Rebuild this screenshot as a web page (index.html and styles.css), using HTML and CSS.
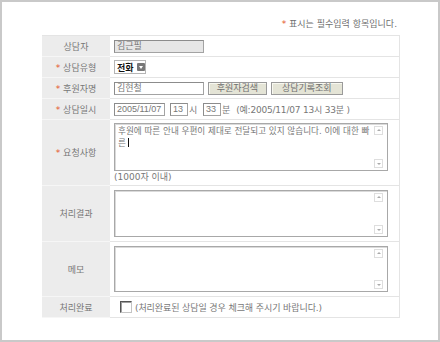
FILE: index.html
```html
<!DOCTYPE html>
<html lang="ko">
<head>
    <meta charset="UTF-8">
    <title>상담 등록</title>
    <link rel="stylesheet" href="styles.css">
</head>
<body>
    <div class="frame">
        <p class="note"><span class="req">*</span> 표시는 필수입력 항목입니다.</p>

        <table class="form">
            <tr class="row-line">
                <th>상담자</th>
                <td><span class="field field-off w-name">김근필</span></td>
            </tr>
            <tr class="row-line">
                <th><span class="req">*</span> 상담유형</th>
                <td>
                    <span class="select">전화<span class="select-arrow"></span></span>
                </td>
            </tr>
            <tr class="row-line">
                <th><span class="req">*</span> 후원자명</th>
                <td>
                    <span class="field w-name">김현철</span>
                    <span class="btn w-btn1">후원자검색</span>
                    <span class="btn w-btn2">상담기록조회</span>
                </td>
            </tr>
            <tr class="row-line">
                <th><span class="req">*</span> 상담일시</th>
                <td>
                    <span class="field w-date">2005/11/07</span>
                    <span class="field w-time">13</span><span class="unit">시</span>
                    <span class="field w-time">33</span><span class="unit">분</span>
                    <span class="example">(예:2005/11/07 13시 33분 )</span>
                </td>
            </tr>
            <tr class="row-request">
                <th><span class="req">*</span> 요청사항</th>
                <td>
                    <div class="textbox tb-request">
                        <div class="textbox-text">후원에 따른 안내 우편이 제대로 전달되고 있지 않습니다. 이에 대한 빠<br>른<span class="caret"></span></div>
                        <div class="scroll"><span class="arrow up"></span><span class="arrow down"></span></div>
                    </div>
                    <div class="limit">(1000자 이내)</div>
                </td>
            </tr>
            <tr class="row-result">
                <th>처리결과</th>
                <td>
                    <div class="textbox tb-result">
                        <div class="textbox-text"></div>
                        <div class="scroll"><span class="arrow up"></span><span class="arrow down"></span></div>
                    </div>
                </td>
            </tr>
            <tr class="row-memo">
                <th>메모</th>
                <td>
                    <div class="textbox tb-memo">
                        <div class="textbox-text"></div>
                        <div class="scroll"><span class="arrow up"></span><span class="arrow down"></span></div>
                    </div>
                </td>
            </tr>
            <tr class="row-line">
                <th>처리완료</th>
                <td>
                    <span class="check"></span><span class="check-text">(처리완료된 상담일 경우 체크해 주시기 바랍니다.)</span>
                </td>
            </tr>
        </table>
    </div>
</body>
</html>
```

FILE: styles.css
```css
body {
    margin: 0;
    font-family: "DejaVu Sans", "Noto Sans CJK KR", sans-serif;
    font-size: 9px;
    color: #777;
    background-color: #fff;
}
.frame {
    width: 440px;
    height: 342px;
    box-sizing: border-box;
    border: 2px solid #c9c9c9;
    padding: 15px 0 0 40px;
}
.note {
    margin: 0;
    width: 355px;
    height: 18px;
    line-height: 14px;
    text-align: right;
    color: #6f6f6f;
}
.req {
    color: #e4582c;
}

/* form table */
.form {
    width: 358px;
    border-collapse: collapse;
    border-top: 1px solid #e4e4e4;
    border-right: 1px solid #e4e4e4;
}
.form th {
    width: 68px;
    padding: 0;
    background-color: #ececec;
    border-bottom: 1px solid #f6f6f6;
    font-weight: normal;
    color: #777;
    text-align: center;
}
.form td {
    padding: 0 0 0 4px;
    border-bottom: 1px solid #e4e4e4;
    white-space: nowrap;
}
.row-line td, .row-line th {
    height: 20px;
}
.row-request td, .row-request th {
    height: 65px;
}
.row-result td, .row-result th {
    height: 55px;
}
.row-memo td, .row-memo th {
    height: 54px;
}

/* inputs */
.field {
    display: inline-block;
    vertical-align: middle;
    box-sizing: border-box;
    height: 13px;
    line-height: 11px;
    padding: 0 2px;
    background-color: #fff;
    border: 1px solid #a3a3a3;
    border-top-color: #8c8c8c;
    border-left-color: #8c8c8c;
    font-family: "Liberation Sans", "Noto Sans CJK KR", sans-serif;
    color: #777;
}
.field-off {
    background-color: #e6e6e6;
}
.w-name {
    width: 90px;
}
.w-date {
    width: 51px;
    margin-right: 2px;
}
.w-time {
    width: 18px;
}
.unit {
    display: inline-block;
    vertical-align: middle;
    margin: 0 3px 0 1px;
}
.example {
    display: inline-block;
    vertical-align: middle;
    letter-spacing: -0.2px;
}

.select {
    display: inline-flex;
    align-items: center;
    vertical-align: middle;
    box-sizing: border-box;
    width: 32px;
    height: 14px;
    padding-left: 2px;
    border: 1px solid #b5b5b5;
    color: #111;
    font-weight: bold;
}
.select-arrow {
    position: relative;
    width: 9px;
    height: 8px;
    margin-left: 3px;
    background-color: #777;
    border-radius: 1px;
}
.select-arrow::after {
    content: "";
    position: absolute;
    left: 2px;
    top: 3px;
    border-left: 2.5px solid transparent;
    border-right: 2.5px solid transparent;
    border-top: 3px solid #fff;
}

.btn {
    display: inline-block;
    vertical-align: middle;
    box-sizing: border-box;
    height: 13px;
    line-height: 11px;
    margin-left: 1px;
    text-align: center;
    background-color: #e4e4d6;
    border: 1px solid #9a9a9a;
    box-shadow: inset 1px 1px #f8f8f0;
    color: #707070;
}
.w-btn1 {
    width: 59px;
}
.w-btn2 {
    width: 72px;
}

/* text areas */
.textbox {
    display: flex;
    box-sizing: border-box;
    width: 274px;
    border: 1px solid #a8a8a8;
    box-shadow: inset 1px 1px #dadada;
    background-color: #fff;
}
.tb-request {
    height: 48px;
}
.tb-result {
    height: 47px;
}
.tb-memo {
    height: 46px;
}
.textbox-text {
    flex: 1;
    padding: 1px 0 0 3px;
    font-size: 8.6px;
    line-height: 12px;
    color: #777;
}
.caret {
    display: inline-block;
    width: 1px;
    height: 9px;
    margin-left: 2px;
    vertical-align: -1px;
    background-color: #111;
}
.scroll {
    display: flex;
    flex-direction: column;
    justify-content: space-between;
    width: 12px;
    padding: 2px 1px 2px 0;
}
.arrow {
    position: relative;
    width: 9px;
    height: 9px;
    box-sizing: border-box;
    border: 1px solid #dedede;
}
.arrow::after {
    content: "";
    position: absolute;
    left: 2px;
    border-left: 2px solid transparent;
    border-right: 2px solid transparent;
}
.arrow.up::after {
    top: 2px;
    border-bottom: 2px solid #aaa;
}
.arrow.down::after {
    top: 3px;
    border-top: 2px solid #aaa;
}
.limit {
    margin-top: 1px;
    line-height: 11px;
}

.check {
    display: inline-block;
    vertical-align: middle;
    box-sizing: border-box;
    width: 12px;
    height: 12px;
    margin: 0 3px 0 6px;
    background-color: #fff;
    border: 1px solid #c4c4c4;
    border-top-color: #555;
    border-left-color: #555;
    box-shadow: inset 1px 1px #a0a0a0;
}
.check-text {
    display: inline-block;
    vertical-align: middle;
    letter-spacing: -0.1px;
}
```
